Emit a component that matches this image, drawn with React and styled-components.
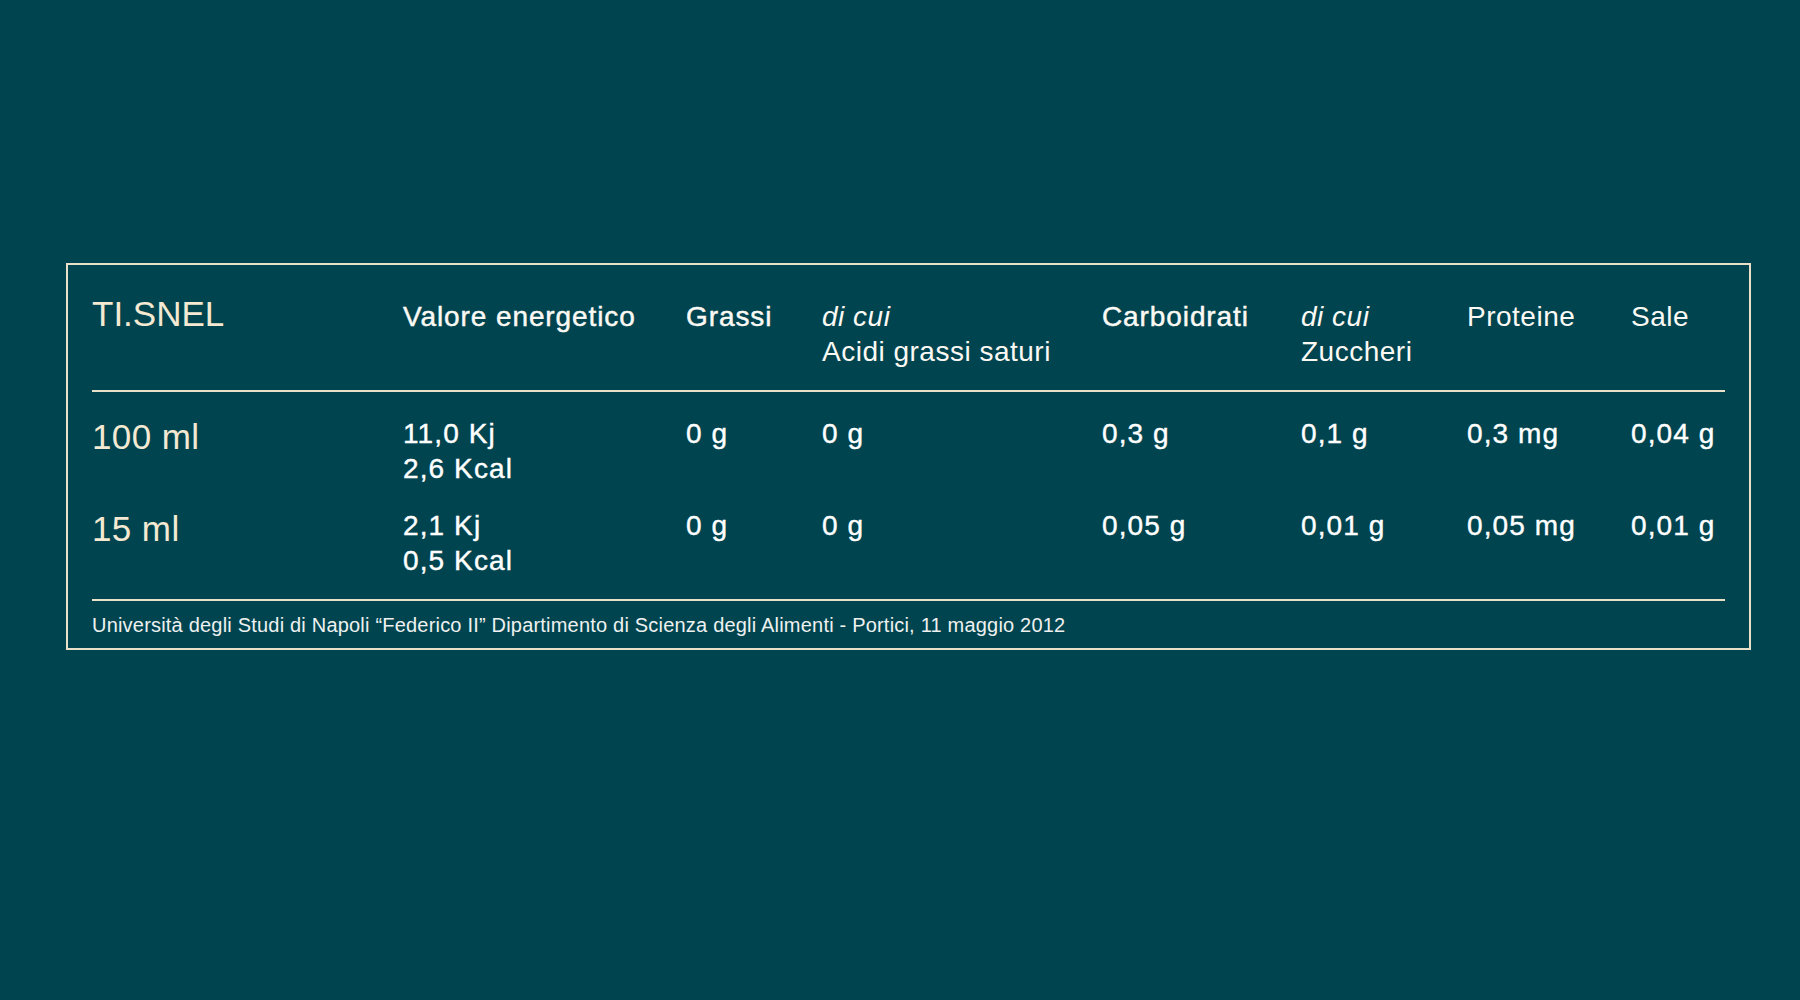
import React from "react";
import styled, { createGlobalStyle } from "styled-components";

const GlobalStyle = createGlobalStyle`
  html, body {
    margin: 0;
    padding: 0;
    background: #00444f;
  }
  body {
    font-family: "Liberation Sans", Arial, sans-serif;
    color: #ffffff;
  }
`;

const COLUMNS = "311px 283px 136px 280px 199px 166px 164px 1fr";

const Page = styled.div`
  width: 1800px;
  height: 1000px;
  box-sizing: border-box;
  padding: 263px 0 0 66px;
`;

const Panel = styled.section`
  width: 1685px;
  box-sizing: border-box;
  border: 2px solid #e9e0ca;
  padding: 33px 24px 10px;
`;

const Grid = styled.div`
  display: grid;
  grid-template-columns: ${COLUMNS};
  align-items: start;
`;

const HeaderRow = styled(Grid)`
  padding-bottom: 21px;
  border-bottom: 2px solid #e9e0ca;
`;

const Brand = styled.div`
  font-size: 35px;
  line-height: 32px;
  color: #f4e9d2;
`;

const HeadCell = styled.div`
  padding-top: 1px;
  font-size: 28px;
  line-height: 35px;
  letter-spacing: ${(p) => (p.$medium ? "0.9px" : "0.5px")};
  color: #fbf9f4;
  -webkit-text-stroke: ${(p) => (p.$medium ? "0.45px #fbf9f4" : "0")};
`;

const Italic = styled.span`
  display: block;
  font-style: italic;
`;

const Body = styled.div`
  display: flex;
  flex-direction: column;
  gap: 22px;
  padding: 24px 0 21px;
  border-bottom: 2px solid #e9e0ca;
`;

const RowLabel = styled.div`
  font-size: 35px;
  line-height: 41px;
  letter-spacing: 0.4px;
  color: #f4e9d2;
`;

const Value = styled.div`
  font-size: 28px;
  line-height: 35px;
  letter-spacing: 1.1px;
  color: #ffffff;
  -webkit-text-stroke: 0.4px #ffffff;
`;

const Source = styled.p`
  margin: 0;
  padding: 12px 0 1px;
  font-size: 20px;
  line-height: 24px;
  letter-spacing: 0.2px;
  color: #eef1ef;
`;

const headers = [
  { label: "Valore energetico", medium: true },
  { label: "Grassi", medium: true },
  { label: "Acidi grassi saturi", sub: "di cui" },
  { label: "Carboidrati", medium: true },
  { label: "Zuccheri", sub: "di cui" },
  { label: "Proteine" },
  { label: "Sale" },
];

const rows = [
  {
    amount: "100 ml",
    values: [["11,0 Kj", "2,6 Kcal"], "0 g", "0 g", "0,3 g", "0,1 g", "0,3 mg", "0,04 g"],
  },
  {
    amount: "15 ml",
    values: [["2,1 Kj", "0,5 Kcal"], "0 g", "0 g", "0,05 g", "0,01 g", "0,05 mg", "0,01 g"],
  },
];

export default function App() {
  return (
    <Page>
      <GlobalStyle />
      <Panel>
        <HeaderRow>
          <Brand>TI.SNEL</Brand>
          {headers.map((h) => (
            <HeadCell key={h.label} $medium={h.medium}>
              {h.sub && <Italic>{h.sub}</Italic>}
              {h.label}
            </HeadCell>
          ))}
        </HeaderRow>

        <Body>
          {rows.map((row) => (
            <Grid key={row.amount}>
              <RowLabel>{row.amount}</RowLabel>
              {row.values.map((v, i) => (
                <Value key={i}>
                  {Array.isArray(v)
                    ? v.map((line) => <div key={line}>{line}</div>)
                    : v}
                </Value>
              ))}
            </Grid>
          ))}
        </Body>

        <Source>
          Università degli Studi di Napoli “Federico II” Dipartimento di Scienza
          degli Alimenti - Portici, 11 maggio 2012
        </Source>
      </Panel>
    </Page>
  );
}
